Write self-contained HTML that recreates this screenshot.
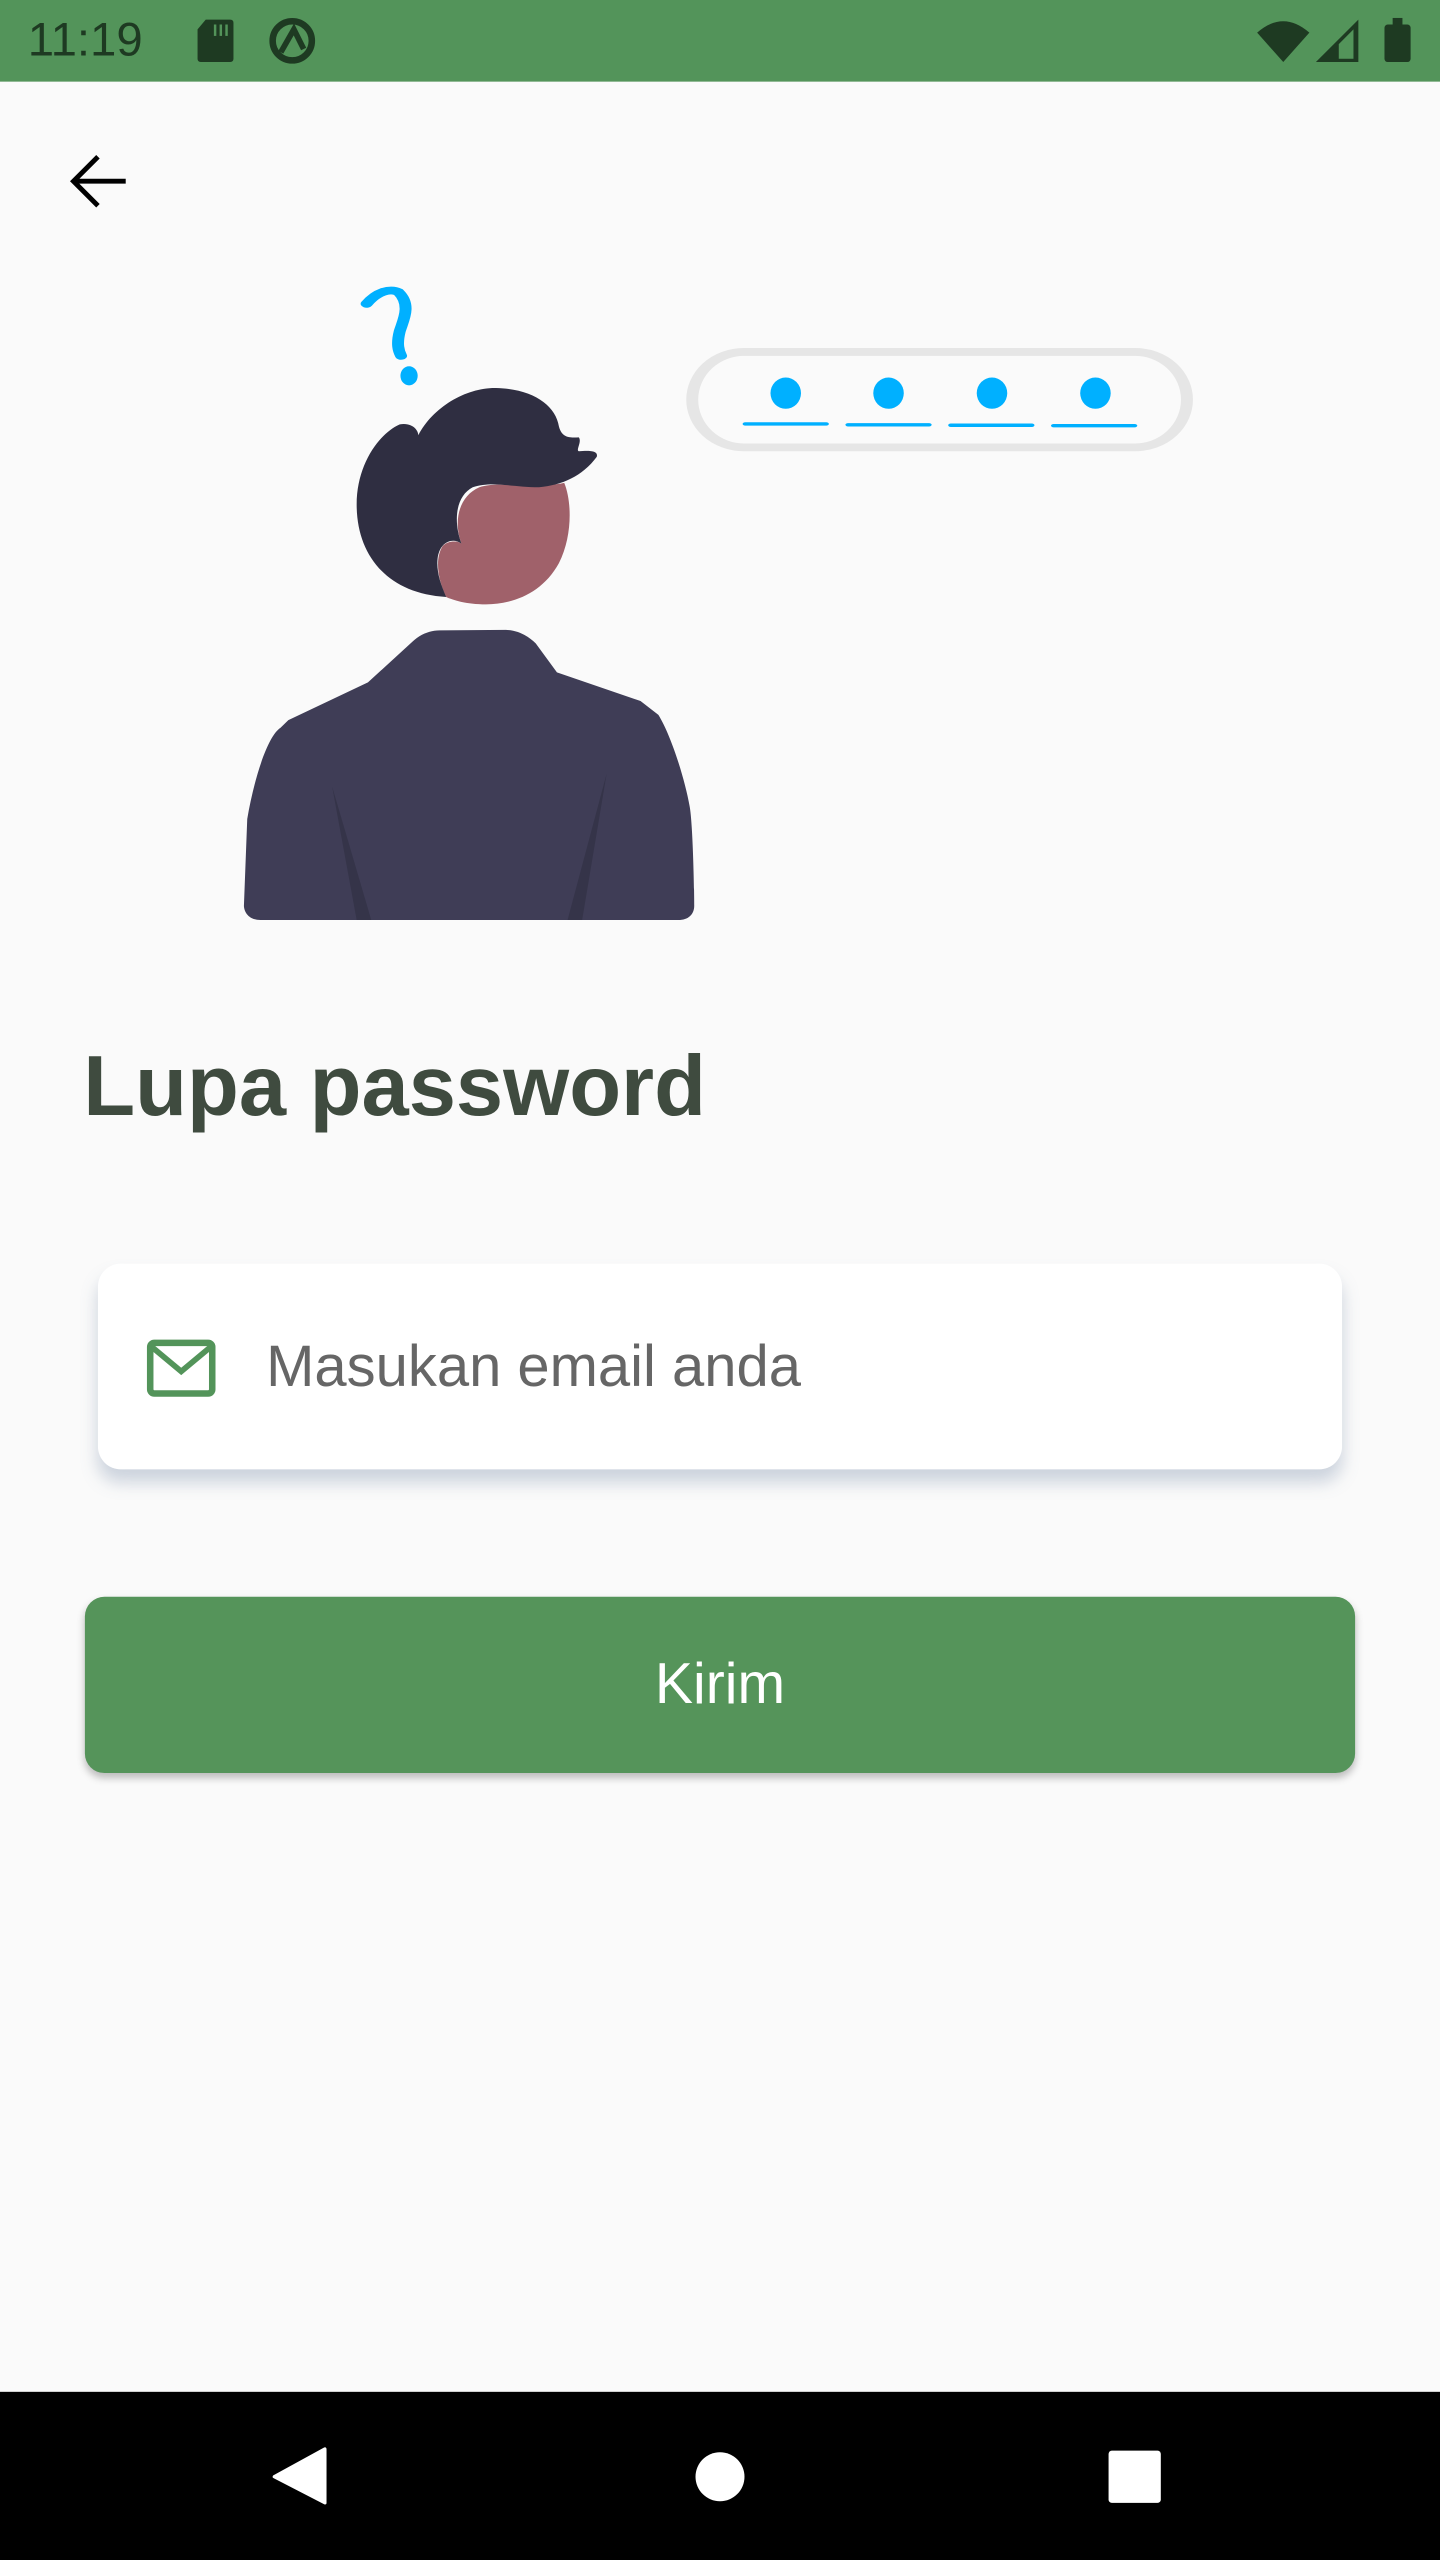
<!DOCTYPE html>
<html><head><meta charset="utf-8"><style>
html,body{margin:0;padding:0;background:#fafafa;width:1440px;height:2560px;overflow:hidden}
#w{position:absolute;left:0;top:0;width:882px;height:1568px;transform:scale(1.63265);transform-origin:0 0;font-family:"Liberation Sans",sans-serif}
.abs{position:absolute}
</style></head><body><div id="w">
<div class="abs" style="left:0;top:0;width:882px;height:50px;background:#53945a"></div>
<div class="abs" style="left:17px;top:9px;font-size:29px;color:#1e3a22;">11:19</div>
<svg class="abs" style="left:0;top:0" width="882" height="50">
<path d="M126 12 H141 Q143 12 143 14 V36 Q143 38 141 38 H123 Q121 38 121 36 V18 Z" fill="#1e3a22"/>
<rect x="131" y="15" width="1.5" height="7" fill="#53945a"/><rect x="134.5" y="15" width="1.5" height="7" fill="#53945a"/><rect x="138" y="15" width="1.5" height="7" fill="#53945a"/>
<circle cx="179" cy="25" r="12" fill="none" stroke="#1e3a22" stroke-width="4"/><path d="M172 32 L180 18 L186 30" fill="none" stroke="#1e3a22" stroke-width="3.5"/>
<path d="M770 20 Q786 6 802 20 L786 38 Z" fill="#1e3a22"/>
<path d="M806 38 L832 12 V38 Z M820 36 H829 V18 L820 27 Z" fill="#1e3a22" fill-rule="evenodd"/>
<rect x="848" y="15" width="16" height="23" rx="2" fill="#1e3a22"/><rect x="853" y="11" width="6" height="5" fill="#1e3a22"/>
</svg>
<svg class="abs" style="left:0;top:0" width="882" height="160">
<path d="M77 111 H45 M60 96 L45 111 L60 126" fill="none" stroke="#000" stroke-width="3"/>
</svg>
<svg class="abs" style="left:122.5px;top:159.2px;overflow:visible" width="700" height="700">
<g transform="scale(0.4062,0.2656)">
<path d="M250,102 C265,75 285,65 298,75 C318,105 305,140 300,165 C295,195 298,210 302,222" fill="none" stroke="#00b0ff" stroke-width="18" stroke-linecap="round"/>
<ellipse cx="314" cy="268" rx="13" ry="22" fill="#00b0ff"/>
<rect x="741" y="213" width="746" height="220" rx="78" ry="110" fill="none" stroke="#e6e6e6" stroke-width="18"/>
<g fill="#00b0ff"><ellipse cx="882" cy="308" rx="23" ry="36"/><ellipse cx="1037" cy="308" rx="23" ry="36"/><ellipse cx="1193" cy="308" rx="23" ry="36"/><ellipse cx="1349" cy="308" rx="23" ry="36"/></g>
<g stroke="#00b0ff" stroke-width="8" stroke-linecap="round"><line x1="821" y1="379" x2="943" y2="379"/><line x1="976" y1="381" x2="1098" y2="381"/><line x1="1131" y1="382" x2="1253" y2="382"/><line x1="1286" y1="383" x2="1408" y2="383"/></g>
<path d="M548,515 C560,560 560,640 540,700 C515,770 470,795 430,795 C400,795 380,785 370,778 C358,740 352,690 365,660 C375,645 390,650 393,655 C380,600 390,545 420,525 C450,510 500,530 548,515 Z" fill="#a0616a"/>
<path d="M370,778 C280,770 235,680 235,565 C235,470 270,400 300,380 C320,375 328,395 328,405 C350,340 400,295 445,296 C500,298 535,335 540,385 C545,415 560,410 570,410 C575,420 565,440 570,442 C585,440 600,440 597,455 C575,500 545,520 510,525 C470,525 440,510 410,525 C385,545 380,600 393,655 C380,640 360,650 357,690 C355,720 362,750 370,778 Z" fill="#2f2e41"/>
<path d="M90,1523 C70,1523 65,1500 65,1490 L70,1290 C80,1200 100,1100 120,1080 L132,1062 L252,975 L320,880 C330,865 345,855 360,855 L460,854 C480,855 495,870 505,885 L537,952 L663,1018 L690,1050 C710,1100 730,1200 737,1260 C742,1300 744,1450 744,1490 C744,1510 735,1523 720,1523 Z" fill="#3f3d56"/>
<path d="M198,1215 L235,1523 L257,1523 Z M612,1185 L553,1523 L575,1523 Z" fill="#2f2e41" opacity="0.6"/>
</g></svg>
<div class="abs" style="left:51px;top:633px;font-size:52px;font-weight:bold;color:#3f4b3f;line-height:66px">Lupa password</div>
<div class="abs" style="left:60px;top:774px;width:762px;height:126px;background:#fff;border-radius:14px;box-shadow:0 8px 10px rgba(120,140,170,0.35)"></div>
<svg class="abs" style="left:88px;top:819px" width="48" height="38"><rect x="4" y="3.5" width="38" height="31" rx="2.5" fill="none" stroke="#53945a" stroke-width="4"/><path d="M5 6 L23 21 L41 6" fill="none" stroke="#53945a" stroke-width="3.5"/></svg>
<div class="abs" style="left:163px;top:815px;font-size:35.5px;color:#666;line-height:44px">Masukan email anda</div>
<div class="abs" style="left:52px;top:978px;width:778px;height:108px;background:#55945a;border-radius:12px;box-shadow:0 3px 5px rgba(0,0,0,0.25);color:#fff;font-size:35px;line-height:108px;text-align:center">Kirim</div>
<div class="abs" style="left:0;top:1465px;width:882px;height:103px;background:#000"></div>
<svg class="abs" style="left:0;top:1465px" width="882" height="103"><path d="M199 35 V68 L168 52 Z" fill="#fff" stroke="#fff" stroke-width="2" stroke-linejoin="round"/><circle cx="441" cy="52" r="15" fill="#fff"/><rect x="679" y="36" width="32" height="32" rx="2" fill="#fff"/></svg>
</div></body></html>
